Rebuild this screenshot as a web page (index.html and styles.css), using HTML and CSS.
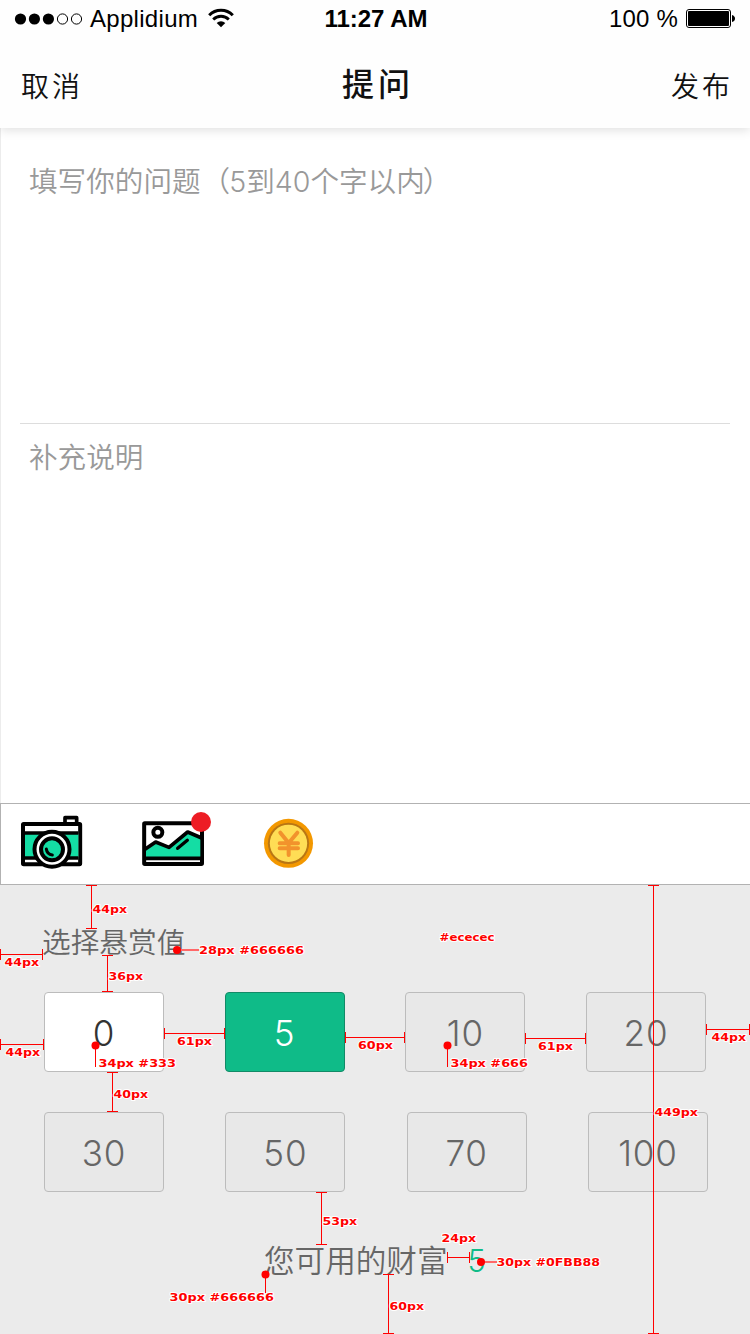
FILE: index.html
```html
<!DOCTYPE html>
<html lang="zh-CN">
<head>
<meta charset="utf-8">
<title>提问</title>
<link rel="stylesheet" href="styles.css">
</head>
<body>
<div class="screen">
  <header class="header">
    <div class="status">
      <div class="status-left">
        <svg class="signal" viewBox="0 0 70 14" width="70" height="14">
          <circle cx="6.5" cy="7" r="5.6"/><circle cx="20.4" cy="7" r="5.6"/><circle cx="34.4" cy="7" r="5.6"/>
          <g fill="none" stroke="#000" stroke-width="1"><circle cx="48.5" cy="7" r="5.1"/><circle cx="62.5" cy="7" r="5.1"/></g>
        </svg>
        <span class="carrier">Applidium</span>
        <svg class="wifi" viewBox="0 0 26 20" width="26" height="20">
          <path d="M1.2 7.2A16.5 16.5 0 0 1 24.8 7.2" fill="none" stroke="#000" stroke-width="3"/>
          <path d="M5.2 11.5A11 11 0 0 1 20.8 11.5" fill="none" stroke="#000" stroke-width="2.8"/>
          <path d="M8.7 15A6.2 6.2 0 0 1 17.3 15L13 19.2Z"/>
        </svg>
      </div>
      <span class="clock">11:27 AM</span>
      <div class="status-right">
        <span class="percent">100 %</span>
        <svg class="battery" viewBox="0 0 50 20" width="50" height="20">
          <rect x=".5" y=".5" width="44" height="18" rx="2.5" fill="#fff" stroke="#000"/>
          <rect x="2" y="2" width="41" height="15" rx="1"/>
          <path d="M46 6q3 1 3 3.500t-3 3.500z"/>
        </svg>
      </div>
    </div>
    <nav class="nav">
      <span class="nav-side">取消</span>
      <h1 class="nav-title">提问</h1>
      <span class="nav-side nav-end">发布</span>
    </nav>
  </header>
  <main class="form">
    <div class="question">填写你的问题<span class="paren-open">（</span><span class="latin">5</span>到<span class="latin">40</span>个字以内<span class="paren-close">）</span></div>
    <div class="detail">补充说明</div>
  </main>
  <div class="toolbar">
    <svg class="camera" viewBox="60 60 189 165" width="63" height="55">
      <path d="M195 85V68H230V85" fill="#fff" stroke="#000" stroke-width="11" stroke-linejoin="round"/>
      <rect x="69" y="87" width="171.500" height="120.500" rx="2" fill="#fff" stroke="#000" stroke-width="12"/>
      <path d="M75 116H235V187H75Z" fill="#14dda4"/>
      <path d="M74 114H235M74 189H235" stroke="#000" stroke-width="11"/>
      <circle cx="156" cy="163" r="52.500" fill="#fff" stroke="#000" stroke-width="12"/>
      <circle cx="156" cy="163" r="33" fill="#14dda4" stroke="#000" stroke-width="12"/>
      <path d="M139 162Q141 178 157 180" fill="none" stroke="#000" stroke-width="9" stroke-linecap="round"/>
    </svg>
    <svg class="photo" viewBox="423 48 213 168" width="71" height="56">
      <rect x="432.500" y="84.500" width="173.500" height="122.500" rx="2" fill="#fff" stroke="#000" stroke-width="12"/>
      <path d="M438 160L467 141L507 157L563 111L601 128V186H438Z" fill="#14dda4"/>
      <path d="M435 163L467 141L507 157L563 111L605 129" fill="none" stroke="#000" stroke-width="11" stroke-linejoin="round"/>
      <path d="M436 190H603" stroke="#000" stroke-width="11"/>
      <path d="M533 160L562 136" stroke="#000" stroke-width="10" stroke-linecap="round"/>
      <circle cx="473.500" cy="112" r="13.500" fill="#fff" stroke="#000" stroke-width="12"/>
      <circle cx="603" cy="81" r="30" fill="#ed1c24"/>
    </svg>
    <svg class="coin" viewBox="789 69 153 153" width="51" height="51">
      <circle cx="865.500" cy="145" r="73.500" fill="#f39800"/>
      <circle cx="865.500" cy="145" r="62" fill="#b97614"/>
      <circle cx="865.500" cy="145" r="56" fill="#ffdd55"/>
      <path d="M841 113L866 144L892 113M866 144V180M839 145H894M839 160H894" fill="none" stroke="#f2932c" stroke-width="12" stroke-linecap="round" stroke-linejoin="round"/>
    </svg>
  </div>
  <section class="panel">
    <h2 class="panel-title">选择悬赏值</h2>
    <div class="options">
      <div class="option option-free">0</div>
      <div class="option option-on">5</div>
      <div class="option">10</div>
      <div class="option">20</div>
    </div>
    <div class="options options-wide">
      <div class="option">30</div>
      <div class="option">50</div>
      <div class="option">70</div>
      <div class="option">100</div>
    </div>
    <p class="balance">您可用的财富<span class="amount">5</span></p>
    <svg class="specs" viewBox="0 885 750 449" width="750" height="449">
      <g class="lines">
        <path d="M91.500 885V928M86 885.500H97M86 928.500H97"/>
        <path d="M0 954.500H43M.5 949V960M42.500 949V960"/>
        <path d="M107.500 955V992M102 955.500H113M102 991.500H113"/>
        <path d="M0 1044.500H44M.5 1039V1050M43.500 1039V1050"/>
        <path d="M164 1033.500H225M164.500 1028V1039M224.500 1028V1039"/>
        <path d="M345 1037.500H405M345.500 1032V1043M404.500 1032V1043"/>
        <path d="M525 1038.500H586M525.500 1033V1044M585.500 1033V1044"/>
        <path d="M706 1029.500H750M706.500 1024V1035M749.500 1024V1035"/>
        <path d="M112.500 1072V1112M107 1072.500H118M107 1111.500H118"/>
        <path d="M321.500 1192V1245M316 1192.500H327M316 1244.500H327"/>
        <path d="M447 1257.500H470M447.500 1252V1263M469.500 1252V1263"/>
        <path d="M388.500 1274V1334M383 1274.500H394M383 1333.500H394"/>
        <path d="M653.500 885V1334M648 885.500H659M648 1333.500H659"/>
        <path d="M95.500 1046V1067M447.500 1046V1067M265.500 1275V1293"/>
        <path class="soft" d="M177 950H199M481 1262H497"/>
      </g>
      <g class="dots">
        <circle cx="177" cy="950" r="4"/><circle cx="95.500" cy="1045.500" r="4"/><circle cx="447.500" cy="1045.500" r="4"/><circle cx="265.500" cy="1274.500" r="4"/><circle cx="481" cy="1262" r="4"/>
      </g>
      <g class="labels">
        <text x="92.500" y="913" textLength="34.500" lengthAdjust="spacingAndGlyphs">44px</text>
        <text x="4.500" y="966" textLength="34.500" lengthAdjust="spacingAndGlyphs">44px</text>
        <text x="199" y="954" textLength="105" lengthAdjust="spacingAndGlyphs">28px #666666</text>
        <text x="439.500" y="941" textLength="55" lengthAdjust="spacingAndGlyphs">#ececec</text>
        <text x="108.500" y="980" textLength="34.500" lengthAdjust="spacingAndGlyphs">36px</text>
        <text x="5.500" y="1056" textLength="34.500" lengthAdjust="spacingAndGlyphs">44px</text>
        <text x="98.500" y="1067" textLength="77.500" lengthAdjust="spacingAndGlyphs">34px #333</text>
        <text x="177" y="1045" textLength="35" lengthAdjust="spacingAndGlyphs">61px</text>
        <text x="358" y="1049" textLength="35" lengthAdjust="spacingAndGlyphs">60px</text>
        <text x="450.500" y="1067" textLength="77.500" lengthAdjust="spacingAndGlyphs">34px #666</text>
        <text x="538" y="1050" textLength="35" lengthAdjust="spacingAndGlyphs">61px</text>
        <text x="711.500" y="1041" textLength="34.500" lengthAdjust="spacingAndGlyphs">44px</text>
        <text x="113.500" y="1098" textLength="34.500" lengthAdjust="spacingAndGlyphs">40px</text>
        <text x="654.500" y="1116" textLength="43.500" lengthAdjust="spacingAndGlyphs">449px</text>
        <text x="322.500" y="1225" textLength="34.500" lengthAdjust="spacingAndGlyphs">53px</text>
        <text x="441.500" y="1242" textLength="34.500" lengthAdjust="spacingAndGlyphs">24px</text>
        <text x="496.500" y="1266" textLength="103.500" lengthAdjust="spacingAndGlyphs">30px #0FBB88</text>
        <text x="169.500" y="1301" textLength="104.500" lengthAdjust="spacingAndGlyphs">30px #666666</text>
        <text x="389.500" y="1310" textLength="34.500" lengthAdjust="spacingAndGlyphs">60px</text>
      </g>
    </svg>
  </section>
</div>
</body>
</html>
```
FILE: styles.css
```css
* { box-sizing: border-box; }
body { margin: 0; }
.screen {
  width: 750px;
  height: 1334px;
  overflow: hidden;
  display: flex;
  flex-direction: column;
  background: #fff;
  font-family: Inter, "Noto Sans CJK SC", sans-serif;
  font-weight: 350;
}
.header {
  height: 128px;
  flex: none;
  z-index: 1;
  background: #fefefe;
  box-shadow: 0 2px 10px rgba(0, 0, 0, .13);
}
.status {
  height: 39px;
  display: grid;
  grid-template-columns: 1fr auto 1fr;
  align-items: center;
  padding: 0 14px 2px;
  font: 400 24px/36px "Liberation Sans", Arial, sans-serif;
  color: #000;
}
.status-left, .status-right { display: flex; align-items: center; }
.status-right { justify-content: flex-end; }
.carrier { margin-left: 6px; letter-spacing: .3px; }
.wifi { margin: -1px 0 0 10px; }
.clock { font-weight: 700; font-size: 24px; margin-left: 2px; }
.percent { letter-spacing: .2px; margin-right: 8px; }
.nav {
  height: 89px;
  display: grid;
  grid-template-columns: 1fr auto 1fr;
  align-items: center;
  padding: 0 17px 0 21px;
  font-family: "Noto Sans CJK SC", sans-serif;
  color: #111;
}
.nav-side { font-size: 28px; line-height: 40px; letter-spacing: 3px; padding-top: 2px; }
.nav-end { text-align: right; }
.nav-title { margin: 0 0 3px 2px; font-size: 32px; line-height: 44px; font-weight: 500; letter-spacing: 4px; }
.form {
  height: 675px;
  flex: none;
  padding: 0 20px 0 19px;
  border-left: 1px solid #ececec;
  font-size: 28.6px;
  line-height: 42px;
  color: #999;
}
.question { height: 296px; padding: 33px 9px 0; border-bottom: 1px solid #ddd; white-space: nowrap; }
.paren-open { margin: 0 -1px 0 1px; }
.paren-close { margin-left: -2px; }
.detail { padding: 13px 9px 0; }
.toolbar {
  height: 82px;
  flex: none;
  display: flex;
  align-items: flex-start;
  border: 1px solid #b2b2b2;
  border-right: 0;
  padding-left: 19px;
}
.camera { margin-top: 11px; }
.photo { margin: 7px 0 0 58px; }
.coin { margin: 14px 0 0 51px; }
.panel {
  position: relative;
  height: 449px;
  flex: none;
  padding: 37px 44px 0;
  background: #ebebeb;
  color: #666;
}
.panel-title { margin: 0 0 29px -2px; font-size: 28.7px; line-height: 41px; font-weight: 350; }
.options { width: 662px; display: flex; justify-content: space-between; margin-bottom: 40px; }
.options-wide { width: 664px; }
.option {
  width: 120px;
  height: 80px;
  padding-top: 1px;
  border: 1px solid #bcbcbc;
  border-radius: 4px;
  background: #e8e8e8;
  font-size: 35px;
  font-weight: 300;
  line-height: 78px;
  letter-spacing: .8px;
  text-align: center;
}
.option-free { background: #fff; color: #333; }
.option-on { background: #0fbb88; border-color: #128a67; color: #fff; }
.balance { margin: 0 0 0 220px; padding-top: 8px; font-size: 30.6px; line-height: 42px; display: flex; }
.amount { margin-left: 20px; color: #0fbb88; }
.specs { position: absolute; left: 0; top: 0; }
.lines { fill: none; stroke: #f00; stroke-width: 1; }
.soft { stroke: #ff6868; stroke-width: 2; }
.dots { fill: #f00; }
.labels {
  font: 700 11px "DejaVu Sans", Verdana, sans-serif;
  fill: #f00;
  stroke: #fff;
  stroke-width: 2px;
  stroke-linejoin: round;
  paint-order: stroke;
}
```
